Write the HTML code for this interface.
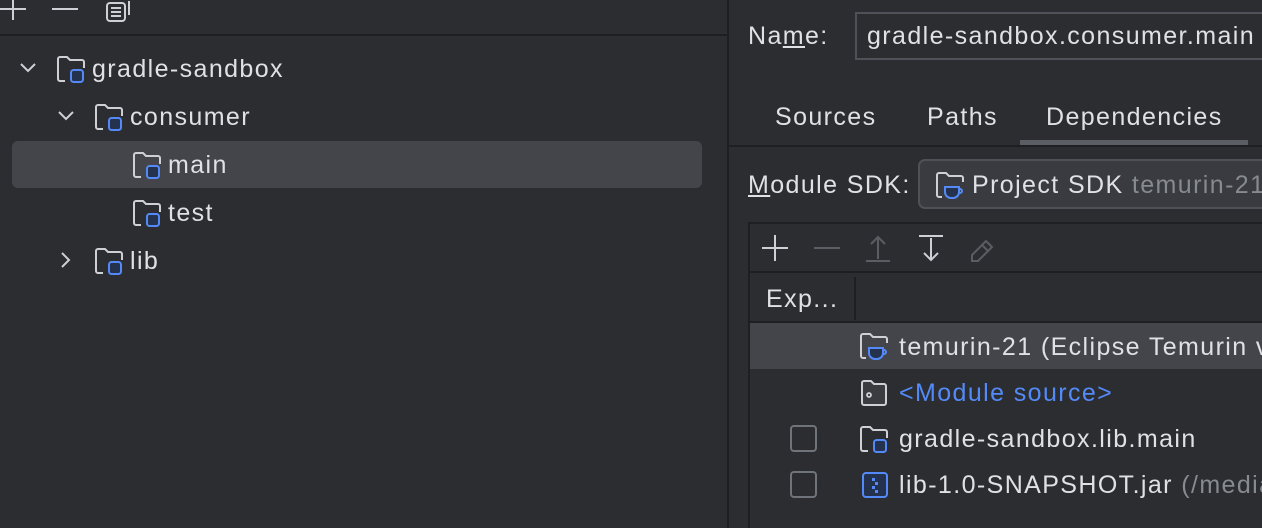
<!DOCTYPE html>
<html><head><meta charset="utf-8"><style>
html,body{margin:0;width:1262px;height:528px;overflow:hidden}
body{background:#2b2d30;position:relative;font-family:"Liberation Sans",sans-serif;color:#dfe1e5;font-size:25px;letter-spacing:1.4px}
.a{position:absolute}
.t{position:absolute;line-height:30px;white-space:nowrap}
svg{position:absolute;overflow:visible}
</style></head><body>
<svg style="left:0;top:0" width="140" height="34" fill="none" stroke="#ced0d6" stroke-width="2">
<path d="M13 0V20M0 9H26"/><path d="M52 9H78"/>
<rect x="107" y="3" width="18" height="18" rx="3"/><path d="M111 8h10M111 12h10M111 16h10M129 1v14"/>
</svg>
<div class="a" style="left:0;top:34px;width:727px;height:2px;background:#1e1f22"></div>
<div class="a" style="left:727px;top:0;width:2px;height:528px;background:#1e1f22"></div>
<div class="a" style="left:12px;top:141px;width:690px;height:47px;border-radius:6px;background:#43454a"></div>
<svg style="left:0;top:0" width="727" height="300" fill="none" stroke="#ced0d6" stroke-width="2">
<path d="M21 64l7 7 7-7"/><path d="M59 112l7 7 7-7"/><path d="M62 253l7 7-7 7"/>
</svg>
<svg style="left:56px;top:56px" width="32" height="28" viewBox="0 0 16 14" fill="none"><path d="M4.5 12.5H2a1 1 0 0 1-1-1V1.5a1 1 0 0 1 1-1h3.5l1.5 1.5h6a1 1 0 0 1 1 1V6" stroke="#ced0d6" stroke-width="1"/><rect x="7.5" y="7" width="6" height="6" rx="1.3" fill="#25324d" stroke="#548af7" stroke-width="1"/></svg>
<div class="t" style="left:92px;top:54px">gradle-sandbox</div>
<svg style="left:94px;top:104px" width="32" height="28" viewBox="0 0 16 14" fill="none"><path d="M4.5 12.5H2a1 1 0 0 1-1-1V1.5a1 1 0 0 1 1-1h3.5l1.5 1.5h6a1 1 0 0 1 1 1V6" stroke="#ced0d6" stroke-width="1"/><rect x="7.5" y="7" width="6" height="6" rx="1.3" fill="#25324d" stroke="#548af7" stroke-width="1"/></svg>
<div class="t" style="left:130px;top:102px">consumer</div>
<svg style="left:132px;top:152px" width="32" height="28" viewBox="0 0 16 14" fill="none"><path d="M4.5 12.5H2a1 1 0 0 1-1-1V1.5a1 1 0 0 1 1-1h3.5l1.5 1.5h6a1 1 0 0 1 1 1V6" stroke="#ced0d6" stroke-width="1"/><rect x="7.5" y="7" width="6" height="6" rx="1.3" fill="#25324d" stroke="#548af7" stroke-width="1"/></svg>
<div class="t" style="left:168px;top:150px">main</div>
<svg style="left:132px;top:200px" width="32" height="28" viewBox="0 0 16 14" fill="none"><path d="M4.5 12.5H2a1 1 0 0 1-1-1V1.5a1 1 0 0 1 1-1h3.5l1.5 1.5h6a1 1 0 0 1 1 1V6" stroke="#ced0d6" stroke-width="1"/><rect x="7.5" y="7" width="6" height="6" rx="1.3" fill="#25324d" stroke="#548af7" stroke-width="1"/></svg>
<div class="t" style="left:168px;top:198px">test</div>
<svg style="left:94px;top:248px" width="32" height="28" viewBox="0 0 16 14" fill="none"><path d="M4.5 12.5H2a1 1 0 0 1-1-1V1.5a1 1 0 0 1 1-1h3.5l1.5 1.5h6a1 1 0 0 1 1 1V6" stroke="#ced0d6" stroke-width="1"/><rect x="7.5" y="7" width="6" height="6" rx="1.3" fill="#25324d" stroke="#548af7" stroke-width="1"/></svg>
<div class="t" style="left:130px;top:246px">lib</div>
<div class="t" style="left:748px;top:21px">Na<u>m</u>e:</div>
<div class="a" style="left:855px;top:12px;border:2px solid #4e5157;box-sizing:border-box;width:420px;height:48px"></div>
<div class="t" style="left:867px;top:21px">gradle-sandbox.consumer.main</div>
<div class="t" style="left:775px;top:102px">Sources</div>
<div class="t" style="left:927px;top:102px">Paths</div>
<div class="t" style="left:1046px;top:102px">Dependencies</div>
<div class="a" style="left:1020px;top:140px;width:228px;height:5px;background:#5a5d63"></div>
<div class="a" style="left:729px;top:145px;width:533px;height:2px;background:#1e1f22"></div>
<div class="t" style="left:748px;top:170px"><u>M</u>odule SDK:</div>
<div class="a" style="left:918px;top:159px;width:360px;height:50px;border:2px solid #4e5157;border-radius:7px;background:#393b40;box-sizing:border-box"></div>
<svg style="left:935px;top:172px" width="32" height="28" viewBox="0 0 16 14" fill="none"><path d="M3.5 12.5H2a1 1 0 0 1-1-1V1.5a1 1 0 0 1 1-1h3.5l1.5 1.5h6a1 1 0 0 1 1 1V5" stroke="#ced0d6" stroke-width="1"/><path d="M5 7.5h7v2.5a3 3 0 0 1-3 3h-1a3 3 0 0 1-3-3z" fill="#25324d" stroke="#548af7" stroke-width="1"/><path d="M12 8.5h0.5a1 1 0 0 1 0 2H12" stroke="#548af7" stroke-width="1"/></svg>
<div class="t" style="left:972px;top:170px">Project SDK <span style="color:#868a91">temurin-21</span></div>
<div class="a" style="left:748px;top:222px;width:2px;height:306px;background:#1e1f22"></div>
<div class="a" style="left:748px;top:222px;width:514px;height:2px;background:#1e1f22"></div>
<svg style="left:750px;top:224px" width="300" height="48" fill="none" stroke-width="2">
<path d="M25 11v26M12 24h26" stroke="#ced0d6"/>
<path d="M64 24h26" stroke="#5a5d63"/>
<path d="M116 37h24M128 35V14M121 20l7-7 7 7" stroke="#5a5d63"/>
<path d="M169 12h24M181 14v22M174 29l7 7 7-7" stroke="#ced0d6"/>
<path d="M222 37v-6l14-14 6 6-14 14zM232 21l6 6" stroke="#5a5d63"/>
</svg>
<div class="a" style="left:750px;top:271px;width:512px;height:2px;background:#1e1f22"></div>
<div class="t" style="left:766px;top:284px">Exp...</div>
<div class="a" style="left:854px;top:277px;width:2px;height:43px;background:#1e1f22"></div>
<div class="a" style="left:750px;top:321px;width:512px;height:2px;background:#1e1f22"></div>
<div class="a" style="left:750px;top:323px;width:512px;height:46px;background:#43454a"></div>
<svg style="left:859px;top:333px" width="32" height="28" viewBox="0 0 16 14" fill="none"><path d="M3.5 12.5H2a1 1 0 0 1-1-1V1.5a1 1 0 0 1 1-1h3.5l1.5 1.5h6a1 1 0 0 1 1 1V5" stroke="#ced0d6" stroke-width="1"/><path d="M5 7.5h7v2.5a3 3 0 0 1-3 3h-1a3 3 0 0 1-3-3z" fill="#25324d" stroke="#548af7" stroke-width="1"/><path d="M12 8.5h0.5a1 1 0 0 1 0 2H12" stroke="#548af7" stroke-width="1"/></svg>
<div class="t" style="left:899px;top:332px">temurin-21 (Eclipse Temurin version 21)</div>
<svg style="left:859px;top:380px" width="30" height="26" viewBox="0 0 15 13" fill="none"><path d="M1.5 11.5v-10a1 1 0 0 1 1-1h3.5l1.5 1.5h5a1 1 0 0 1 1 1v8.5a1 1 0 0 1-1 1h-10a1 1 0 0 1-1-1z" fill="#3a3c40" stroke="#ced0d6" stroke-width="1"/><circle cx="5" cy="7.5" r="1" stroke="#ced0d6" stroke-width="0.9"/></svg>
<div class="t" style="left:899px;top:378px;color:#548af7">&lt;Module source&gt;</div>
<div class="a" style="left:790px;top:425px;width:27px;height:27px;border:2px solid #6f737a;border-radius:4px;box-sizing:border-box"></div>
<svg style="left:859px;top:426px" width="32" height="28" viewBox="0 0 16 14" fill="none"><path d="M4.5 12.5H2a1 1 0 0 1-1-1V1.5a1 1 0 0 1 1-1h3.5l1.5 1.5h6a1 1 0 0 1 1 1V6" stroke="#ced0d6" stroke-width="1"/><rect x="7.5" y="7" width="6" height="6" rx="1.3" fill="#25324d" stroke="#548af7" stroke-width="1"/></svg>
<div class="t" style="left:899px;top:424px">gradle-sandbox.lib.main</div>
<div class="a" style="left:790px;top:471px;width:27px;height:27px;border:2px solid #6f737a;border-radius:4px;box-sizing:border-box"></div>
<svg style="left:862px;top:472px" width="26" height="26" viewBox="0 0 13 13" fill="none"><rect x="0.5" y="0.5" width="12" height="12" rx="1.5" fill="#25324d" stroke="#548af7" stroke-width="1"/><path d="M5 3h1.5v1.5H5zM6.5 5H8v1.5H6.5zM5 7h1.5v1.5H5zM6.5 9H8v1.5H6.5z" fill="#548af7"/></svg>
<div class="t" style="left:899px;top:470px">lib-1.0-SNAPSHOT.jar <span style="color:#868a91">(/media/build/libs)</span></div>
</body></html>
